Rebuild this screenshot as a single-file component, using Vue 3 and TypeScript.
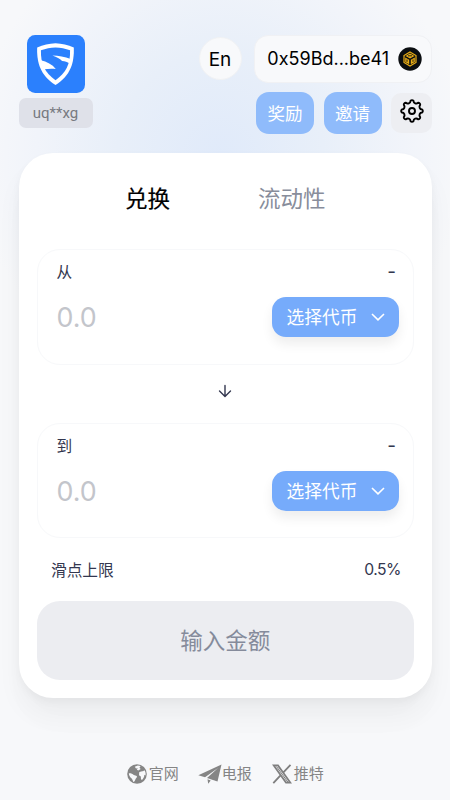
<script setup lang="ts">
import { ref } from 'vue'

interface SwapField {
  label: string
  balance: string
}

const tabs: string[] = ['兑换', '流动性']
const activeTab = ref<number>(0)
const fields: SwapField[] = [
  { label: '从', balance: '-' },
  { label: '到', balance: '-' },
]
const amounts = ref<string[]>(['', ''])

// Outline of an eight-toothed gear centred on 12,12
function gearOutline(radius: number, halfTooth: number): string {
  const point = (deg: number): string => {
    const rad = (deg * Math.PI) / 180
    return `${(12 + radius * Math.cos(rad)).toFixed(2)} ${(12 + radius * Math.sin(rad)).toFixed(2)}`
  }
  let d = `M${point(-halfTooth)}`
  for (let a = 0; a < 360; a += 45) {
    d += `A1.900 1.900 0 0 1 ${point(a + halfTooth)}A2.700 2.700 0 0 0 ${point(a + 45 - halfTooth)}`
  }
  return d + 'Z'
}
const gear = gearOutline(10.2, 8.5)
</script>

<template>
  <div class="page">
    <header class="header">
      <div class="brand">
        <svg class="logo" viewBox="0 0 57 57">
          <rect width="57" height="57" rx="8" fill="#2b80fd" />
          <path fill="#fff" d="M28 8.200C34.500 8.400 40 9.800 46 12.400C46.500 27 43 40 28 49.200C13 40 9.500 27 10 12.400C16 9.800 21.500 8.400 28 8.200Z" />
          <path fill="#2b80fd" d="M28 12.300C33 12.400 37.800 13.300 42.300 15.100C42.800 28 38.500 37.500 28 44.500C17.500 37.500 13.300 28 13.700 15.100C18.500 13.300 23 12.400 28 12.300Z" />
          <path fill="#fff" d="M25 20.200C31 20.200 37 21.800 43 23.500L42 28C39.500 26.500 37.500 25.800 34.500 25.500C32 23.300 29.500 21.800 25 20.200Z" />
          <path fill="#fff" d="M13.500 24.800C19.500 26 24.800 29 28.300 33.300C24.800 32.900 21 33 16.200 33.700Z" />
        </svg>
        <span class="invite-code">uq**xg</span>
      </div>
      <div class="controls">
        <div class="row">
          <button class="lang">En</button>
          <button class="wallet">
            <span>0x59Bd...be41</span>
            <svg class="chain" viewBox="0 0 24 24">
              <circle cx="12" cy="12" r="11.700" fill="#0b0e11" />
              <path d="M12 5 18 8.500V15.500L12 19 6 15.500V8.500Z" fill="none" stroke="#e9ad16" stroke-width="1.200" />
              <path d="M12 6.500 16.500 9 12 11.500 7.500 9ZM7.200 10.500 11.200 12.800V17.300L7.200 15ZM16.800 10.500 12.800 12.800V17.300L16.800 15Z" fill="#e9ad16" />
              <path d="M10 8.800H14M9 12.500V14.800M15 12.500V14.800" stroke="#0b0e11" stroke-width=".9" />
            </svg>
          </button>
        </div>
        <div class="row actions">
          <button class="action"><span>奖励</span></button>
          <button class="action"><span>邀请</span></button>
          <button class="settings">
            <svg viewBox="0 0 24 24" fill="none" stroke="#000" stroke-width="1.900" stroke-linejoin="round">
              <circle cx="12" cy="12" r="3" />
              <path :d="gear" />
            </svg>
          </button>
        </div>
      </div>
    </header>

    <main class="card">
      <nav class="tabs">
        <button
          v-for="(tab, i) in tabs"
          :key="tab"
          class="tab"
          :class="{ active: activeTab === i }"
          @click="activeTab = i"
        >{{ tab }}</button>
      </nav>

      <template v-for="(field, i) in fields" :key="field.label">
        <section class="field">
          <div class="field-head">
            <span>{{ field.label }}</span>
            <span class="balance">{{ field.balance }}</span>
          </div>
          <div class="field-body">
            <input v-model="amounts[i]" class="amount" placeholder="0.0" inputmode="decimal" />
            <button class="token">
              <span>选择代币</span>
              <svg viewBox="0 0 14 8" fill="none" stroke="#fff" stroke-width="1.600">
                <path d="M1 1 7 6.800 13 1" />
              </svg>
            </button>
          </div>
        </section>
        <div v-if="i === 0" class="arrow">
          <svg viewBox="0 0 14 14" fill="none" stroke="#33374f" stroke-width="1.400" stroke-linecap="round" stroke-linejoin="round">
            <path d="M7 1.500V12.400M1.500 7 7 12.500 12.500 7" />
          </svg>
        </div>
      </template>

      <div class="slippage">
        <span>滑点上限</span>
        <span class="percent">0.5%</span>
      </div>
      <button class="submit" disabled>输入金额</button>
    </main>

    <footer class="footer">
      <a class="link">
        <svg class="globe" viewBox="0 0 20 20">
          <circle cx="10" cy="10" r="9.800" fill="#858585" />
          <path fill="#f7f8fa" d="M1.800 9.400C3.500 9.100 5.500 9.800 6.800 11L9.800 12.100C10.300 13 9.500 14 8.700 14.700L7.600 17.300 6.200 18C5.800 16.500 5.400 15.200 4.400 14.300C3.200 13 2 11.500 1.800 9.400ZM7.800 2.700 10.800 1.500 13.600 2.100 12.500 3.800 13.700 5 11.300 6.500 9.800 5.800 10.800 4.200 9 4.500ZM12.200 8.300C13.600 7.300 15 7.500 16 7.300L17.500 6.200C18.600 7.800 18.900 9.500 18.500 11.500L17.300 10.700C17.500 12.700 16.300 14.300 15.200 15.800L14 15.600 13.800 12.500 12 11.200Z" />
        </svg>
        <span>官网</span>
      </a>
      <a class="link">
        <svg class="plane" viewBox="0 0 24 20">
          <path fill="#858585" d="M23.500.5.300 11.200 7 13.300 20 3.900 9 14.100 19.500 17.500ZM9.500 15.200 12.700 16.400 10.200 19.700Z" />
        </svg>
        <span>电报</span>
      </a>
      <a class="link last">
        <svg class="x-mark" viewBox="0 0 20 20" fill="none" stroke="#7f7f7f">
          <path stroke-width="1.800" d="M1.700 1.400H6L18.300 18.600H14ZM18.500 .8 11.400 8.400M1.300 19.200 8.500 11.300" />
          <path stroke-width="1" d="M4.500 2.500 15.800 18" />
        </svg>
        <span>推特</span>
      </a>
    </footer>
  </div>
</template>

<style>
body {
  margin: 0;
  background: #f7f8fa;
}
</style>

<style scoped>
.page {
  box-sizing: border-box;
  height: 800px;
  display: flex;
  flex-direction: column;
  padding: 34.5px 18px 0 18.500px;
  overflow: hidden;
  background: radial-gradient(circle 245px at 220px 155px, #e0eafa 0%, #e8eff9 42%, #f1f4fa 75%, #f7f8fa 100%);
  font-family: Inter, "Noto Sans CJK SC", sans-serif;
  color: #33374f;
}
button {
  display: flex;
  align-items: center;
  justify-content: center;
  border: 0;
  padding: 0;
  font: inherit;
  color: inherit;
  background: none;
  white-space: nowrap;
}
.header {
  display: flex;
  justify-content: space-between;
  height: 118px;
}
.brand {
  width: 74px;
  display: flex;
  flex-direction: column;
  align-items: center;
  gap: 5px;
}
.logo {
  display: block;
  width: 58px;
  height: 58px;
}
.invite-code {
  width: 74px;
  height: 30.500px;
  border-radius: 7px;
  background: #dfe1e9;
  color: #777980;
  font: 15px/31px Roboto, sans-serif;
  text-align: center;
}
.controls {
  display: flex;
  flex-direction: column;
  gap: 9.500px;
}
.row {
  display: flex;
  align-items: center;
  justify-content: flex-end;
  gap: 12px;
}
.lang {
  box-sizing: border-box;
  width: 43px;
  height: 43px;
  padding-top: 1px;
  border: 1px solid #f1f2f4;
  border-radius: 50%;
  background: #f8f9fb;
  color: #000;
  font-size: 19px;
}
.wallet {
  box-sizing: border-box;
  width: 178.500px;
  height: 48px;
  gap: 9px;
  padding-left: 4px;
  border: 1px solid #f0f1f4;
  border-radius: 14px;
  background: #f8f9fb;
  color: #000;
  font-size: 18px;
}
.chain {
  width: 24px;
  height: 24px;
}
.actions {
  gap: 9.500px;
}
.action {
  width: 58px;
  height: 42px;
  box-sizing: border-box;
  padding-bottom: 2px;
  border-radius: 13px;
  background: #8fbbfb;
  color: #fff;
  font-size: 17.500px;
}
.settings {
  width: 41px;
  height: 40px;
  border-radius: 10px;
  background: #edeef2;
}
.settings svg {
  width: 24px;
  height: 24px;
  margin-top: -4px;
}
.card {
  box-sizing: border-box;
  height: 545px;
  display: flex;
  flex-direction: column;
  padding: 0 18.500px 18px;
  border-radius: 34px;
  background: #fff;
  box-shadow: 0 0 1px rgba(0, 0, 0, .01), 0 4px 9px rgba(0, 0, 0, .04), 0 18px 27px rgba(0, 0, 0, .04), 0 27px 36px rgba(0, 0, 0, .01);
}
.tabs {
  display: flex;
  justify-content: center;
  gap: 88px;
  height: 97px;
}
.tab {
  height: 89px;
  font-size: 22.500px;
  color: #888d9b;
}
.tab.active {
  color: #000;
  -webkit-text-stroke: .2px #000;
}
.field {
  box-sizing: border-box;
  height: 115.500px;
  padding: 11px 13.500px 0 18.500px;
  border: 1px solid #f7f8fa;
  border-radius: 23px;
}
.field-head {
  display: flex;
  justify-content: space-between;
  height: 22px;
  padding-right: 3px;
  line-height: 23px;
  font-size: 15.700px;
}
.balance {
  font-size: 19px;
  line-height: 21px;
}
.field-body {
  display: flex;
  align-items: center;
  justify-content: space-between;
  height: 40px;
  margin-top: 14px;
}
.amount {
  width: 180px;
  height: 40px;
  padding: 0;
  border: 0;
  outline: 0;
  background: transparent;
  font: 26.800px/40px Inter, sans-serif;
  color: #33374f;
}
.amount::placeholder {
  color: #c3c5cb;
  opacity: 1;
}
.token {
  width: 127px;
  height: 40px;
  gap: 14px;
  padding-left: 1px;
  box-sizing: border-box;
  border-radius: 14px;
  background: #76abfb;
  color: #fff;
  font-size: 17.700px;
  box-shadow: 0 7px 12px rgba(0, 0, 0, .07);
}
.token span {
  margin-bottom: 2px;
}
.token svg {
  width: 14px;
  height: 8px;
}
.arrow {
  display: flex;
  align-items: center;
  justify-content: center;
  height: 58px;
  padding-bottom: 5px;
  box-sizing: border-box;
}
.arrow svg {
  width: 14px;
  height: 14px;
}
.slippage {
  display: flex;
  justify-content: space-between;
  align-items: center;
  height: 62.500px;
  padding: 0 12.500px 0 14px;
  font-size: 15.700px;
}
.percent {
  letter-spacing: -.5px;
}
.submit {
  height: 79px;
  padding-bottom: 3px;
  box-sizing: border-box;
  border-radius: 23px;
  background: #ecedf1;
  color: #858b9b;
  font-size: 22.500px;
}
.footer {
  display: flex;
  justify-content: center;
  gap: 19px;
  margin-top: 64px;
  color: #858585;
  font-size: 15px;
  line-height: 24px;
}
.link {
  display: flex;
  align-items: center;
  gap: 2px;
}
.link.last {
  margin-left: 1px;
}
.globe,
.x-mark {
  width: 20px;
  height: 20px;
}
.plane {
  width: 24px;
  height: 20px;
  margin-right: -2px;
}
</style>
